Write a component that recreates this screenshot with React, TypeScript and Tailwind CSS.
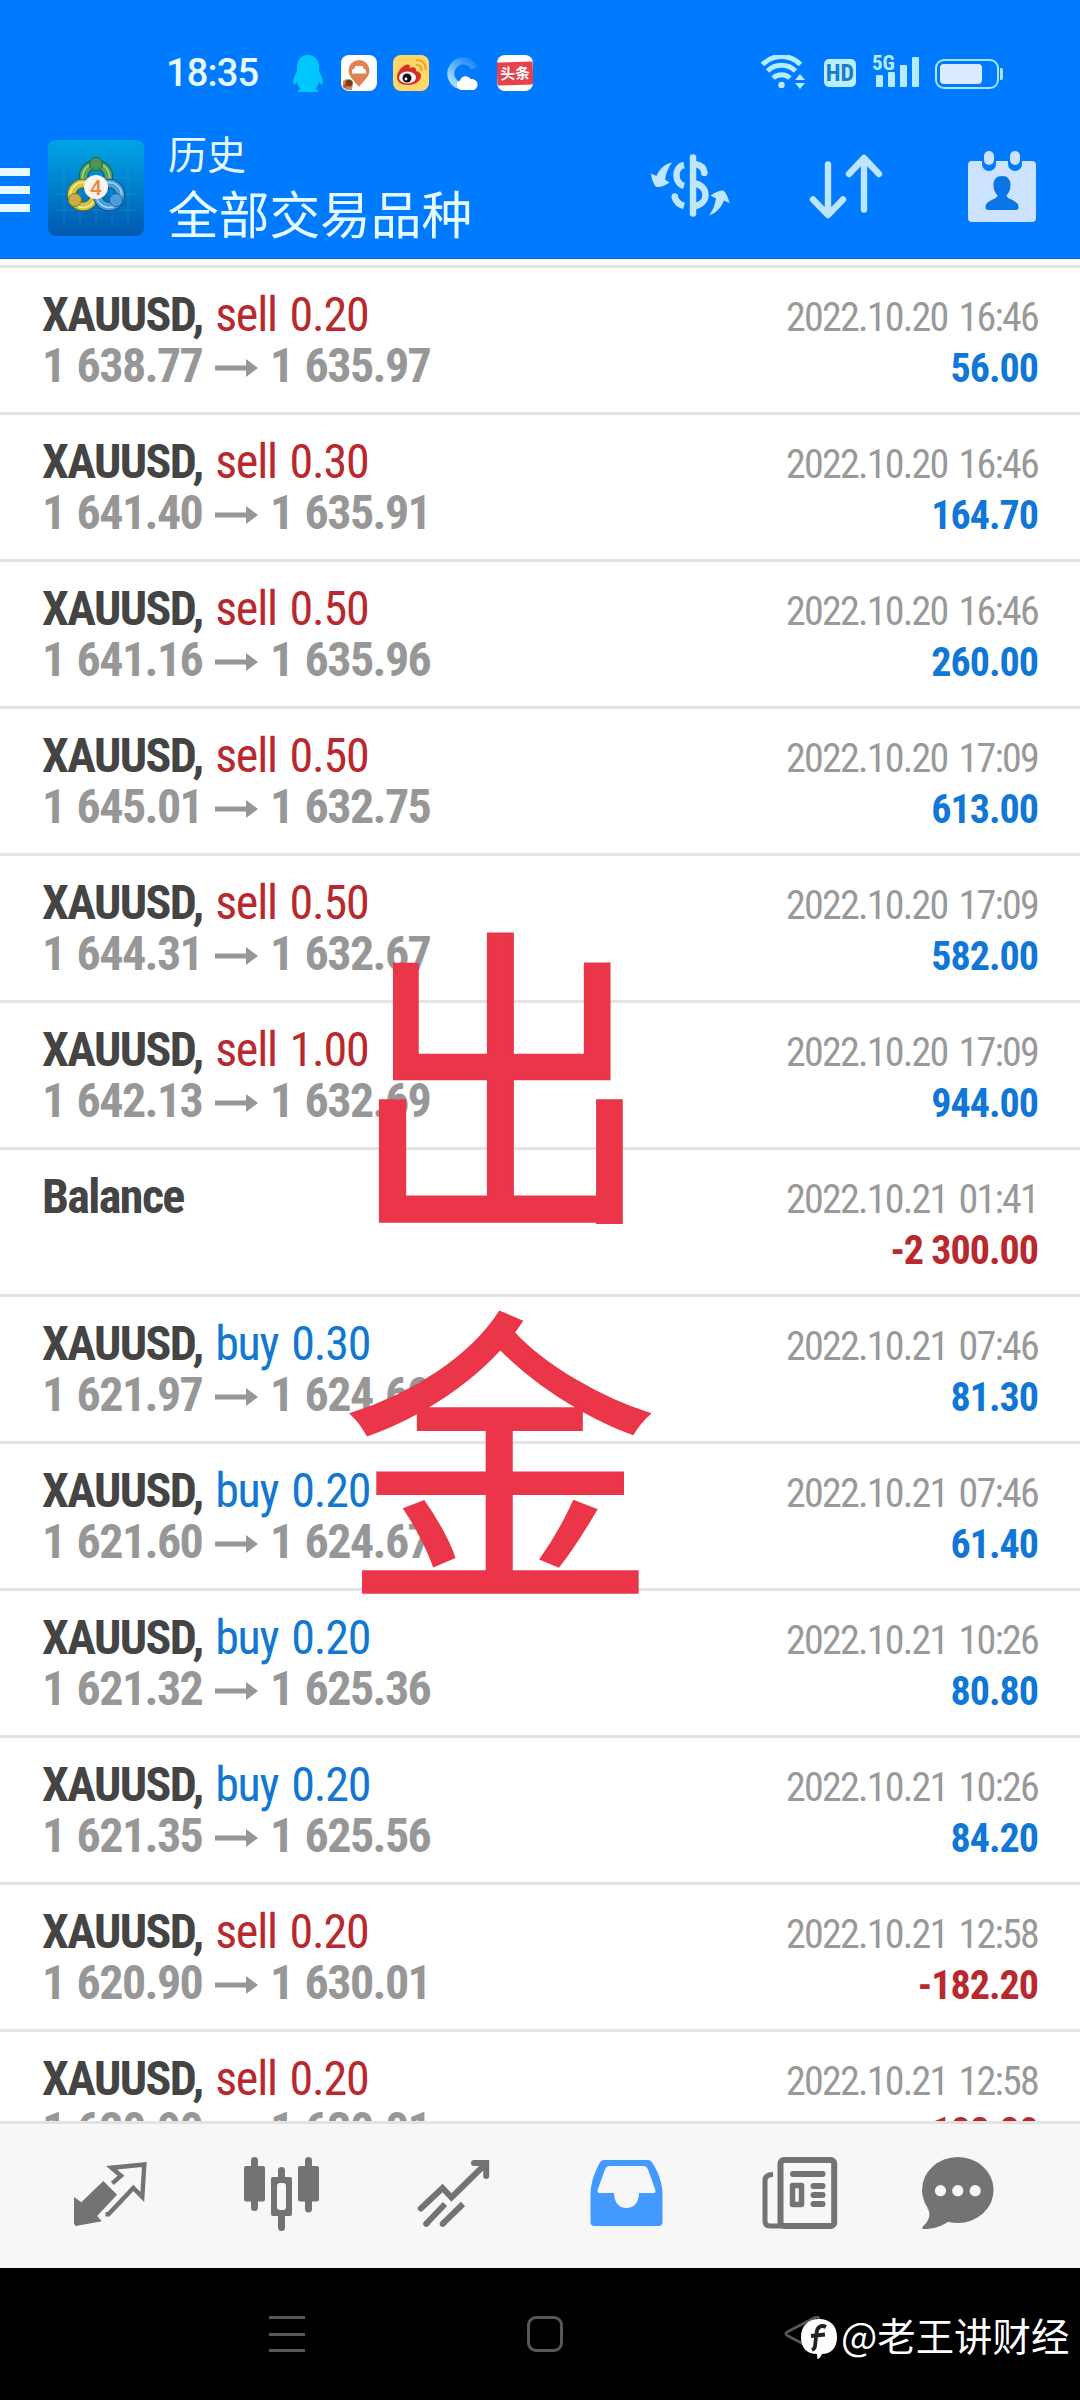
import { clsx } from 'clsx'

type Side = 'buy' | 'sell'

interface Deal {
  side?: Side
  volume?: string
  open?: string
  close?: string
  time: string
  profit: string
}

const DEALS: Deal[] = [
  { side: 'sell', volume: '0.20', open: '1 638.77', close: '1 635.97', time: '2022.10.20 16:46', profit: '56.00' },
  { side: 'sell', volume: '0.30', open: '1 641.40', close: '1 635.91', time: '2022.10.20 16:46', profit: '164.70' },
  { side: 'sell', volume: '0.50', open: '1 641.16', close: '1 635.96', time: '2022.10.20 16:46', profit: '260.00' },
  { side: 'sell', volume: '0.50', open: '1 645.01', close: '1 632.75', time: '2022.10.20 17:09', profit: '613.00' },
  { side: 'sell', volume: '0.50', open: '1 644.31', close: '1 632.67', time: '2022.10.20 17:09', profit: '582.00' },
  { side: 'sell', volume: '1.00', open: '1 642.13', close: '1 632.69', time: '2022.10.20 17:09', profit: '944.00' },
  { time: '2022.10.21 01:41', profit: '-2 300.00' },
  { side: 'buy', volume: '0.30', open: '1 621.97', close: '1 624.69', time: '2022.10.21 07:46', profit: '81.30' },
  { side: 'buy', volume: '0.20', open: '1 621.60', close: '1 624.67', time: '2022.10.21 07:46', profit: '61.40' },
  { side: 'buy', volume: '0.20', open: '1 621.32', close: '1 625.36', time: '2022.10.21 10:26', profit: '80.80' },
  { side: 'buy', volume: '0.20', open: '1 621.35', close: '1 625.56', time: '2022.10.21 10:26', profit: '84.20' },
  { side: 'sell', volume: '0.20', open: '1 620.90', close: '1 630.01', time: '2022.10.21 12:58', profit: '-182.20' },
  { side: 'sell', volume: '0.20', open: '1 620.90', close: '1 630.01', time: '2022.10.21 12:58', profit: '-182.20' },
]

export default function App() {
  return (
    <div className="relative flex h-[2400px] w-[1080px] flex-col overflow-hidden bg-white font-['Roboto','Noto_Sans_CJK_SC',sans-serif]">
      <header className="h-[259px] shrink-0 border-b border-[#1c68bd] bg-[#007aff]">
        <StatusBar />
        <TitleBar />
      </header>

      <main className="relative h-[1862px] shrink-0 overflow-hidden pt-[6px] [font-stretch:75%]">
        {DEALS.map((deal, i) => (
          <DealRow key={i} deal={deal} />
        ))}
        <Stamp />
      </main>

      <TabBar />
      <NavigationBar />
    </div>
  )
}

function StatusBar() {
  return (
    <div className="flex h-[128px] items-start pl-[166px] pt-[55px]">
      <span className="w-[127px] text-[38px] leading-[37px] font-medium tracking-[-0.8px] text-[#e9fbff]">18:35</span>
      <div className="flex gap-[16px]">
        <QQIcon />
        <CarPinIcon />
        <WeiboIcon />
        <CloudIcon />
        <div className="flex size-9 items-center overflow-hidden rounded-[8px] bg-white">
          <span className="h-[23px] w-9 -rotate-2 bg-[#e8414a] text-center font-['Noto_Sans_CJK_SC',sans-serif] text-[15px] leading-[22px] font-bold text-white">
            头条
          </span>
        </div>
      </div>
      <div className="ml-[227px] flex">
        <svg className="h-9 w-[48px]" viewBox="0 0 48 36" fill="none" stroke="#b5ecff" strokeWidth="5">
          <path d="M2.500 9.500a26.500 26.500 0 0 1 38 0M7.500 16a20 20 0 0 1 28 0M13 23a12.500 12.500 0 0 1 17 0" />
          <circle cx="21.500" cy="30" r="3.200" fill="#b5ecff" stroke="none" />
          <path d="M35 25l5-6 5 6zM35 28l5 6 5-6z" fill="#b5ecff" stroke="none" />
        </svg>
        <span className="mt-1 ml-[16px] h-7 w-8 rounded-[5px] bg-[#b9eeff] text-center text-[24px] leading-7 font-bold text-[#1a7cc4] [font-stretch:75%]">
          HD
        </span>
        <div className="relative ml-[16px] flex h-8 w-[48px] items-end gap-[5.500px] pl-1">
          <span className="absolute -top-[4px] left-0 text-[21px] leading-6 font-bold text-[#b5ecff] [font-stretch:75%]">5G</span>
          <i className="h-3 w-[6.500px] rounded-[1px] bg-[#b5ecff]" />
          <i className="h-[15px] w-[6.500px] rounded-[1px] bg-[#b5ecff]" />
          <i className="h-[22px] w-[6.500px] rounded-[1px] bg-[#b5ecff]" />
          <i className="h-[30px] w-[6.500px] rounded-[1px] bg-[#b5ecff]" />
        </div>
        <div className="mt-[2px] ml-[15px] flex items-center gap-[1px]">
          <div className="h-[30px] w-[64px] rounded-[9px] border-2 border-[#a8e2ff] p-[3px]">
            <div className="h-5 w-[42px] rounded-[4px] bg-[#dcebff]" />
          </div>
          <div className="h-3 w-[3px] rounded-r-[2px] bg-[#a8e2ff]" />
        </div>
      </div>
    </div>
  )
}

function TitleBar() {
  return (
    <div className="flex h-[130px]">
      <div className="mt-[40px] flex w-[30px] flex-col gap-[10px]">
        <i className="h-2 bg-[#e4faff]" />
        <i className="h-2 bg-[#e4faff]" />
        <i className="h-2 bg-[#e4faff]" />
      </div>
      <AppLogo />
      <div className="ml-[24px] w-[477px] font-['Noto_Sans_CJK_SC',sans-serif] whitespace-nowrap text-[#e6fbff]">
        <p className="mt-[2px] text-[39px] leading-[44px]">历史</p>
        <p className="mt-[8px] text-[50.700px] leading-[60px]">全部交易品种</p>
      </div>
      <svg className="mt-[21px] h-[72px] w-[90px]" viewBox="0 0 90 72" fill="none" stroke="#c0e6ff" strokeWidth="6.500">
        <path d="M48 8.500v56" strokeLinecap="round" />
        <path d="M39 16c-10 2-10 18 0 21" />
        <path d="M29.500 47c1 5 4 8.500 9.500 10" strokeLinecap="butt" />
        <path d="M50 15c6 1 9 4 9.500 9" />
        <circle cx="59.300" cy="24" r="3.200" fill="#c0e6ff" stroke="none" />
        <circle cx="29.800" cy="47.500" r="3.200" fill="#c0e6ff" stroke="none" />
        <path d="M50 34.500c14 3 14 20 0 22.500" />
        <path d="M27 13.500c-4 5-6 11-7 17l4.500 3c-4 3-8 5-13.500 4.500-3-4-4.500-8-5-13.500l5.500 2.500c3-7 8-12 15.500-13.500z" fill="#c0e6ff" stroke="none" />
        <path d="M64 66.500c4-5 6-11 7-17l-5.500-3c4-3 8-5 13-5 3.500 4 5 8 6 12.500l-5.500-2.500c-3 7-7 12-15 15z" fill="#c0e6ff" stroke="none" />
      </svg>
      <svg
        className="mt-[21px] ml-[71px] h-[72px] w-[80px]"
        viewBox="0 0 80 72"
        fill="none"
        stroke="#bce6ff"
        strokeWidth="6.400"
        strokeLinecap="round"
        strokeLinejoin="round"
      >
        <path d="M22 15.500v50M7 50.500l15 15.500 15-15.500M58 60.500v-51M43 25l15-16 15 16" />
      </svg>
      <svg className="mt-[20px] ml-[78px] h-[76px] w-[76px]" viewBox="0 0 76 76" fill="#cbe3ff">
        <rect x="4" y="13" width="68" height="61" rx="4" />
        <path d="M18 12h14v4a7 7 0 0 1-14 0zM44 12h14v4a7 7 0 0 1-14 0z" fill="#007aff" />
        <rect x="20" y="3" width="10" height="14" rx="5" />
        <rect x="46" y="3" width="10" height="14" rx="5" />
        <path
          d="M38 28c6 0 9 4 8.500 10-.3 5-2.500 8-4 9.500 0 4 11.500 4.500 12 11 .2 3-1 3.500-3 3.500h-27c-2 0-3.200-.5-3-3.500.5-6.500 12-7 12-11-1.500-1.500-3.700-4.500-4-9.500C29 32 32 28 38 28z"
          fill="#0a76e6"
        />
      </svg>
    </div>
  )
}

function DealRow({ deal }: { deal: Deal }) {
  const negative = deal.profit.startsWith('-')
  return (
    <div className="flex h-[147px] justify-between border-t-[3px] border-[#e3e3e3] pr-[42px] pl-[42px] whitespace-nowrap">
      <div className="pt-[21px] text-[48px] leading-[51px] font-bold tracking-[-1.600px]">
        {deal.side ? (
          <>
            <p className="text-[#444]">
              XAUUSD,
              <span
                className={clsx(
                  'ml-[12.500px] font-normal tracking-[-1.200px] [word-spacing:3px]',
                  deal.side === 'sell' ? 'text-[#b8282c]' : 'text-[#1177d1]',
                )}
              >
                {deal.side} {deal.volume}
              </span>
            </p>
            <p className="flex items-center text-[#979797] [word-spacing:2.500px]">
              <span className="w-[173px]">{deal.open}</span>
              <svg className="mt-[4px] mr-[12px] h-[18px] w-[43px]" viewBox="0 0 43 18" fill="#979797">
                <path d="M0 6.500h31V0l12 9-12 9v-6.500H0z" />
              </svg>
              <span>{deal.close}</span>
            </p>
          </>
        ) : (
          <p className="text-[#444]">Balance</p>
        )}
      </div>
      <div className="pt-[24px] text-right text-[40px] leading-[51px]">
        <p className="tracking-[-1.750px] text-[#999] [word-spacing:3.500px]">{deal.time}</p>
        <p className={clsx('font-bold tracking-[-1px]', negative ? 'text-[#b8282c]' : 'text-[#1177d6]')}>{deal.profit}</p>
      </div>
    </div>
  )
}

/** Big red note lying over the deal list. */
function Stamp() {
  return (
    <div className="absolute top-[620px] left-[340px] w-[322px] text-center font-['Noto_Sans_CJK_SC',sans-serif] text-[322px] leading-[376px] text-[#ea3648] [-webkit-text-stroke:2px_#ea3648] [font-stretch:100%]">
      {/* the box ends at the base stroke, so the corners stay flush */}
      <div className="h-[345px] overflow-hidden">
        <p className="translate-y-[2px] scale-x-[0.95] scale-y-[1.040]">出</p>
      </div>
      <p className="mt-[29px] -translate-x-px scale-x-[0.985] scale-y-[0.970]">金</p>
    </div>
  )
}

function TabBar() {
  return (
    <nav className="flex h-[147px] shrink-0 border-t-[3px] border-[#e3e3e3] bg-[#f7f7f7] pt-[30px] pl-[70px] text-[#737373]">
      <svg className="size-20" viewBox="0 0 80 80" fill="none" stroke="currentColor" strokeWidth="4.400">
        <path d="M4 43l7.300 5.300 22-21.300 13.800 13.700L27.100 62l4.800 5.300L5.800 72 4 70z" fill="currentColor" stroke="none" />
        <path d="M42.300 29.300l8.700-7.600-9.500-8 32.800-3.200L72.300 43l-9-9-24.800 26.300h-3" />
      </svg>
      <svg className="ml-[91px] size-20" viewBox="0 0 80 80" fill="currentColor">
        <rect x="3" y="12" width="21" height="35.500" rx="2" />
        <rect x="10" y="3" width="7" height="54" rx="3.500" />
        <rect x="57" y="12" width="21" height="35.500" rx="2" />
        <rect x="64" y="3" width="7" height="55.500" rx="3.500" />
        <rect x="37" y="13" width="7" height="64" rx="3.500" />
        <rect x="30" y="23" width="21" height="39" rx="2" />
        <rect x="36" y="29" width="9" height="27" rx="3" fill="#f7f7f7" />
      </svg>
      <svg className="ml-[92px] size-20" viewBox="0 0 80 80" fill="none" stroke="currentColor" strokeWidth="6">
        <path d="M7.800 54.500L29.500 34l9 9.500L72.500 10" strokeLinecap="round" />
        <path d="M61 9h12.200v13" strokeLinecap="round" />
        <path d="M32 50L13 70M50 50L29.800 69.700" />
        <path d="M14 69l-.8.800M30.500 69l-.8.800" strokeLinecap="round" />
      </svg>
      <svg className="ml-[93px] size-20" viewBox="0 0 80 80" fill="#429aff">
        <path
          fillRule="evenodd"
          d="M18 6h44c2 0 3 1 4 2.500C72 17 76.500 29 76.500 40v28a4 4 0 0 1-4 4h-64a4 4 0 0 1-4-4V40C4.500 29 9 17 14 8.500 15 7 16 6 18 6zM24 12c-2.500 0-4 1-5 3.500L12 35c-1 3-.5 4 1.500 4H28c0 9 5 15 12.500 15S53 48 53 39h14.500c2 0 2.500-1 1.500-4l-7-19.500c-1-2.500-2.500-3.500-5-3.500z"
        />
      </svg>
      <svg className="ml-[94px] size-20" viewBox="0 0 80 80" fill="none" stroke="currentColor" strokeWidth="6">
        <rect x="20.500" y="6" width="53.700" height="66" rx="3.500" />
        <path d="M13 20.500c-5 0-8 1.500-8 6V67c0 3.500 1.500 5 5 5h12" strokeWidth="5" />
        <path d="M33 20h29.500M53.500 32h9M53.500 41h9M53.500 50h9" strokeLinecap="round" />
        <rect x="32.500" y="31.500" width="9" height="19" strokeWidth="5.500" strokeLinejoin="round" />
      </svg>
      <svg className="ml-[78px] size-20" viewBox="0 0 80 80" fill="currentColor">
        <ellipse cx="39.800" cy="36" rx="35.800" ry="33" />
        <path d="M9 54c4 4 3.500 12-4.500 19-1 1.500 0 2 1.500 2 9 0 18-2.500 25-8z" />
        <g fill="#f7f7f7">
          <circle cx="22.500" cy="36.700" r="5.600" />
          <circle cx="39.800" cy="36.700" r="5.600" />
          <circle cx="57.200" cy="36.700" r="5.600" />
        </g>
      </svg>
    </nav>
  )
}

function NavigationBar() {
  return (
    <footer className="relative flex h-[132px] shrink-0 bg-black pt-[48px] pl-[269px]">
      <div className="flex h-9 w-9 flex-col justify-between">
        <i className="h-[3px] bg-[#585858]" />
        <i className="h-[3px] bg-[#585858]" />
        <i className="h-[3px] bg-[#585858]" />
      </div>
      <div className="ml-[222px] size-9 rounded-[9px] border-[3px] border-[#585858]" />
      <svg className="ml-[221px] h-9 w-10" viewBox="0 0 40 36" fill="none" stroke="#585858" strokeWidth="2.600">
        <path d="M35 3v30c0 2-1 2.500-3 1.500L4 20c-3-1.500-3-3 0-4.500L31 1.500c2-1 4-.5 4 1.500z" />
      </svg>
      {/* watermark */}
      <div className="absolute top-[39px] left-[800px] flex items-center">
        <svg className="mt-[8px] h-[42px] w-[38px]" viewBox="0 0 38 42">
          <path d="M19 2c11 0 18 6.500 18 18S30.500 37 22 37c-1 2-2 4-4.500 5.500L17 37C7 37 1 31 1 20S8 2 19 2z" fill="#fff" />
          <path d="M26 10c-5-2.500-9 0-9.500 6L15 29c0 2-1 3-3 4M11 19l14-1.500" fill="none" stroke="#222" strokeWidth="3.800" />
        </svg>
        <span className="ml-[3px] font-['Noto_Sans_CJK_SC',sans-serif] text-[38.400px] leading-[54px] whitespace-nowrap text-white">
          @老王讲财经
        </span>
      </div>
    </footer>
  )
}

function AppLogo() {
  return (
    <svg className="mt-[12px] ml-[18px] size-24" viewBox="0 0 96 96">
      <defs>
        <linearGradient id="tile" x1="0" y1="0" x2="0" y2="1">
          <stop offset="0" stopColor="#00a5e6" />
          <stop offset="1" stopColor="#0058b0" />
        </linearGradient>
      </defs>
      <rect width="96" height="96" rx="8" fill="url(#tile)" />
      <path d="M16 10v76M32 10v76M48 10v76M64 10v76M80 10v76M8 22h80M8 38h80M8 54h80M8 70h80" stroke="#39b4e8" strokeWidth=".6" opacity=".4" />
      <g fill="none">
        <circle cx="48" cy="37" r="12.500" stroke="#1c5a3c" strokeWidth="9.500" />
        <circle cx="48" cy="37" r="12.500" stroke="#59a35c" strokeWidth="7.500" />
        <circle cx="48" cy="37" r="13.500" stroke="#a5d69a" strokeWidth="1.500" />
        <circle cx="35" cy="55" r="11.500" stroke="#5c6a22" strokeWidth="9.500" />
        <circle cx="35" cy="55" r="11.500" stroke="#d3c545" strokeWidth="7.500" />
        <circle cx="35" cy="55" r="12.500" stroke="#f4ee9a" strokeWidth="1.500" />
        <circle cx="61" cy="55" r="11.500" stroke="#154f86" strokeWidth="9.500" />
        <circle cx="61" cy="55" r="11.500" stroke="#4a9fdb" strokeWidth="7.500" />
        <circle cx="61" cy="55" r="12.500" stroke="#a6d8f6" strokeWidth="1.500" />
      </g>
      <circle cx="48" cy="24" r="6.500" fill="#4e9350" stroke="#2c5f3b" />
      <circle cx="27" cy="60" r="6.500" fill="#c9b040" stroke="#7d7430" />
      <circle cx="68" cy="60" r="6.500" fill="#4e9ce0" stroke="#24639f" />
      <circle cx="48" cy="47" r="12" fill="#f8f3ec" />
      <text x="48" y="54.500" textAnchor="middle" fontSize="21" fontWeight="500" fontFamily="Roboto, sans-serif" fill="#e88b3c">
        4
      </text>
    </svg>
  )
}

function QQIcon() {
  return (
    <svg className="h-[37px] w-[32px]" viewBox="0 0 32 37" fill="#00c8ff">
      <path d="M15 0c7 0 11 5 11 12v4c2 4 4.500 8 3.500 13-1 1.500-2 0-3.500-2-.5 3-2 5-3.500 6.500 2 1 2.500 1.500 2.500 3.500H5c0-2 .5-2.500 2.500-3.500C6 32 4.500 30 4 27c-1.500 2-2.500 3.500-3.500 2C-.5 24 2 20 4 16v-4C4 5 8 0 15 0z" />
    </svg>
  )
}

function CarPinIcon() {
  return (
    <svg className="size-9" viewBox="0 0 36 36">
      <rect width="36" height="36" rx="8" fill="#fff" />
      <path d="M18 32c-5-7-10.500-10-10.500-16.500a10.500 10.500 0 0 1 21 0C28.500 22 23 25 18 32z" fill="#e08253" />
      <path d="M11 16c0-1.500 1-2 2-2l1.500-3h7l1.500 3c1 0 2 .5 2 2v2.500H11z" fill="#fff" />
      <path d="M2 26c3-3 8-2 10 1l-1 8H6c-3-1-4-3-4-9z" fill="#c98a5a" />
      <circle cx="8" cy="28" r="3.500" fill="#7a3a22" />
      <circle cx="4" cy="31" r="2" fill="#d0452f" />
    </svg>
  )
}

function WeiboIcon() {
  return (
    <svg className="size-9" viewBox="0 0 36 36">
      <rect width="36" height="36" rx="8" fill="#ffd766" />
      <path d="M4 22C4 16 11 9 15 9.500c2 .3 2 2 1.500 3.500 4-1.500 7-1 6.500 3 2 .5 5 1.500 5 5 0 5-6 9-13 9S4 27 4 22z" fill="#db2b26" />
      <ellipse cx="14.500" cy="22.500" rx="8.500" ry="6" fill="#fff" />
      <circle cx="14" cy="23" r="4.500" fill="#111" />
      <circle cx="13" cy="24" r="1.400" fill="#fff" />
      <path d="M23 10c4-.5 6 2 5.500 6M23 5.500c7-1 10.500 4 9.500 9.500" fill="none" stroke="#eba23a" strokeWidth="2" />
    </svg>
  )
}

function CloudIcon() {
  return (
    <svg className="mr-0.5 ml-px h-9 w-[33px]" viewBox="0 0 33 36">
      <defs>
        <linearGradient id="ring" x1="1" y1="0" x2="0.200" y2="1">
          <stop offset="0" stopColor="#1585f5" />
          <stop offset="1" stopColor="#a9dcff" />
        </linearGradient>
      </defs>
      <path d="M28.500 13A12.500 12.500 0 1 0 16 31" fill="none" stroke="url(#ring)" strokeWidth="7" />
      <path d="M15 35a5 5 0 0 1-1-9.500c1-5 8-6 10.500-1.500 4-.5 7 2 7 5.500s-2.500 5.500-5 5.500z" fill="#fff" />
    </svg>
  )
}
